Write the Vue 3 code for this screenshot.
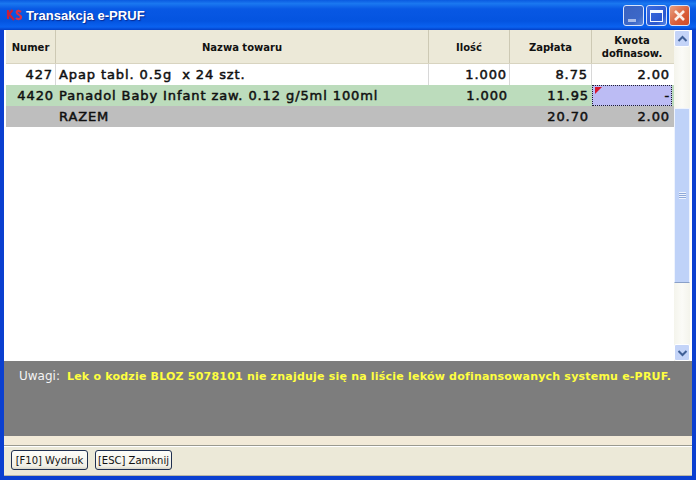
<script setup>
const rows = [
  { num: "427", name: "Apap tabl. 0.5g  x 24 szt.", qty: "1.000", paid: "8.75", amount: "2.00", kind: "plain" },
  { num: "4420", name: "Panadol Baby Infant zaw. 0.12 g/5ml 100ml", qty: "1.000", paid: "11.95", amount: "-", kind: "active" },
  { num: "", name: "RAZEM", qty: "", paid: "20.70", amount: "2.00", kind: "total" },
];
</script>

<template>
  <div class="window">
    <div class="titlebar">
      <svg class="app-icon" width="16" height="16" viewBox="0 0 16 16">
        <path d="M2 3v9M2.5 8l4-5M3 7l5 6" stroke="#c8203c" stroke-width="2.2" fill="none" />
        <path d="M15 5c-3-2-5-1-4 1s4 2 4 4-3 3-5 1" stroke="#d83048" stroke-width="2.2" fill="none" />
      </svg>
      <span class="title">Transakcja e-PRUF</span>
      <div class="caption-buttons">
        <div class="cap cap-min"><i></i></div>
        <div class="cap cap-max"><i></i></div>
        <div class="cap cap-close">
          <svg width="15" height="15" viewBox="0 0 15 15">
            <path d="M3 3l9 9M12 3l-9 9" stroke="#fbeee8" stroke-width="2.6" />
          </svg>
        </div>
      </div>
    </div>

    <div class="client">
      <div class="grid-area">
        <div class="grid">
          <div class="row head">
            <div class="c num">Numer</div>
            <div class="c name">Nazwa towaru</div>
            <div class="c qty">Ilość</div>
            <div class="c paid">Zapłata</div>
            <div class="c amount">Kwota<br />dofinasow.</div>
          </div>
          <div v-for="row in rows" :key="row.name" class="row body" :class="row.kind">
            <div class="c num">{{ row.num }}</div>
            <div class="c name">{{ row.name }}</div>
            <div class="c qty">{{ row.qty }}</div>
            <div class="c paid">{{ row.paid }}</div>
            <div class="c amount"><span v-if="row.kind === 'active'" class="flag"></span>{{ row.amount }}</div>
          </div>
        </div>
        <div class="scrollbar">
          <div class="arrow">
            <svg width="11" height="8" viewBox="0 0 11 8"><path d="M1.5 6l4-4 4 4" stroke="#3f5f96" stroke-width="2" fill="none" /></svg>
          </div>
          <div class="track-top"></div>
          <div class="thumb"><span class="grip"></span></div>
          <div class="track-bottom"></div>
          <div class="arrow">
            <svg width="11" height="8" viewBox="0 0 11 8"><path d="M1.5 2l4 4 4-4" stroke="#3f5f96" stroke-width="2" fill="none" /></svg>
          </div>
        </div>
      </div>

      <div class="notes">
        <span class="notes-label">Uwagi:</span>
        <span class="notes-text">Lek o kodzie BLOZ 5078101 nie znajduje się na liście leków dofinansowanych systemu e-PRUF.</span>
      </div>

      <div class="spacer"></div>

      <div class="footer">
        <button class="btn">[F10] Wydruk</button>
        <button class="btn">[ESC] Zamknij</button>
      </div>
    </div>
  </div>
</template>

<style scoped>
.window {
  width: 696px;
  height: 480px;
  display: flex;
  flex-direction: column;
  background: #0a3fd0;
  overflow: hidden;
  box-sizing: border-box;
  padding-bottom: 4px;
}

.titlebar {
  height: 30px;
  flex: none;
  display: flex;
  align-items: center;
  padding: 2px 6px 0 6px;
  box-sizing: border-box;
  background: linear-gradient(180deg, #0a5ae0 0%, #1a78f0 12%, #0858e4 30%, #0454e0 70%, #0a62f0 90%, #0340c8 100%);
}

.app-icon {
  flex: none;
  margin-bottom: 3px;
}

.title {
  margin-left: 4px;
  margin-bottom: 1px;
  color: #fff;
  font: bold 13px "Liberation Sans", Arial, sans-serif;
  letter-spacing: 0.05px;
  text-shadow: 1px 1px 1px #0a2a90;
}

.caption-buttons {
  margin-left: auto;
  display: flex;
  gap: 2px;
  margin-bottom: 1px;
}

.cap {
  width: 21px;
  height: 21px;
  box-sizing: border-box;
  border: 1px solid #d8e4fc;
  border-radius: 3px;
  background: linear-gradient(135deg, #3c6ce0, #2a58d0 70%, #5a88e8);
  display: flex;
  align-items: center;
  justify-content: center;
  position: relative;
}

.cap-min {
  background: linear-gradient(135deg, #3a62c0, #3c68c8 70%, #6088d8);
}

.cap-min i {
  width: 8px;
  height: 3px;
  background: #a8bce8;
  margin-top: 9px;
  margin-right: 3px;
}

.cap-max i {
  width: 13px;
  height: 12px;
  box-sizing: border-box;
  border: 1px solid #f4f8ff;
  border-top-width: 3px;
}

.cap-close {
  background: linear-gradient(135deg, #e8a080, #d85c38 60%, #d04c28);
}

.client {
  flex: 1;
  margin: 0 4px;
  display: flex;
  flex-direction: column;
  background: #ece9d8;
  min-height: 0;
}

.grid-area {
  height: 331px;
  flex: none;
  display: flex;
  background: #fff;
  box-sizing: border-box;
  padding-left: 2px;
}

.grid {
  width: 668px;
  flex: none;
}

.row {
  display: grid;
  grid-template-columns: 50px 373px 81px 82px 80px 2px;
}

.head {
  height: 34px;
  background: #ece9d8;
  border-bottom: 1px solid #d8d4c0;
  box-sizing: border-box;
  font: bold 10px/13px "DejaVu Sans", Verdana, sans-serif;
  color: #111;
}

.head .c {
  display: flex;
  align-items: center;
  justify-content: center;
  text-align: center;
  border-right: 1px solid #cdc9b4;
  box-sizing: border-box;
  padding-top: 1px;
}

.head .amount {
  border-right: none;
}

.body {
  height: 21px;
  font: 13px/21px "DejaVu Sans", Verdana, sans-serif;
  color: #101010;
  letter-spacing: 0.9px;
  -webkit-text-stroke: 0.5px #101010;
}

.body .c {
  box-sizing: border-box;
  white-space: pre;
  padding: 0 2px 0 3px;
  position: relative;
}

.body .num,
.body .qty,
.body .paid,
.body .amount {
  text-align: right;
}

.body .paid {
  padding-right: 3px;
}

.plain {
  background: #fff;
}

.plain .c {
  border-right: 1px solid #d8d8d8;
}

.plain .amount {
  border-right: none;
}

.active {
  background: #bcdcbc;
}

.active .amount {
  background: #bcbcf4;
  outline: 1px dotted #202030;
  outline-offset: -1px;
}

.flag {
  position: absolute;
  left: 3px;
  top: 2px;
  width: 0;
  height: 0;
  border-style: solid;
  border-width: 7px 7px 0 0;
  border-color: #d81830 transparent transparent transparent;
}

.total {
  background: #bebebe;
}

.scrollbar {
  width: 16px;
  flex: none;
  display: flex;
  flex-direction: column;
  background: linear-gradient(90deg, #f4f4ec, #fbfbf7 50%, #f4f4ec);
}

.arrow {
  width: 16px;
  height: 17px;
  flex: none;
  box-sizing: border-box;
  border: 1px solid #fff;
  border-radius: 2px;
  background: #c4d4f8;
  display: flex;
  align-items: center;
  justify-content: center;
}

.track-top {
  height: 61px;
  flex: none;
}

.thumb {
  height: 175px;
  flex: none;
  box-sizing: border-box;
  background: #bfd2f8;
  border: 1px solid #eef3fd;
  border-bottom-color: #8aa0c8;
  display: flex;
  align-items: center;
  justify-content: center;
}

.grip {
  width: 7px;
  height: 7px;
  background: repeating-linear-gradient(180deg, #eef3fd 0 1px, #8ea8d8 1px 2px);
}

.track-bottom {
  flex: 1;
}

.notes {
  height: 75px;
  flex: none;
  background: #7d7d7d;
  box-sizing: border-box;
  padding: 7px 0 0 15px;
  font: 12px/16px "DejaVu Sans", Verdana, sans-serif;
  white-space: pre;
}

.notes-label {
  color: #f4f4f4;
  margin-right: 7px;
}

.notes-text {
  color: #ffff40;
  font-weight: bold;
  font-size: 11px;
  letter-spacing: 0.21px;
}

.spacer {
  height: 9px;
  flex: none;
  background: #f2ead8;
  border-bottom: 1px solid #9a9a90;
}

.footer {
  flex: 1;
  display: flex;
  align-items: center;
  gap: 7px;
  padding: 0 0 2px 7px;
  border-top: 1px solid #fff;
  border-bottom: 1px solid #b8b6a8;
}

.btn {
  width: 77px;
  height: 20px;
  padding: 0;
  border: 1px solid #203050;
  border-radius: 3px;
  background: linear-gradient(180deg, #fdfdf8, #f0efe6 85%, #d8d6c8);
  color: #111;
  font: 10px "DejaVu Sans", Verdana, sans-serif;
  white-space: nowrap;
}
</style>
